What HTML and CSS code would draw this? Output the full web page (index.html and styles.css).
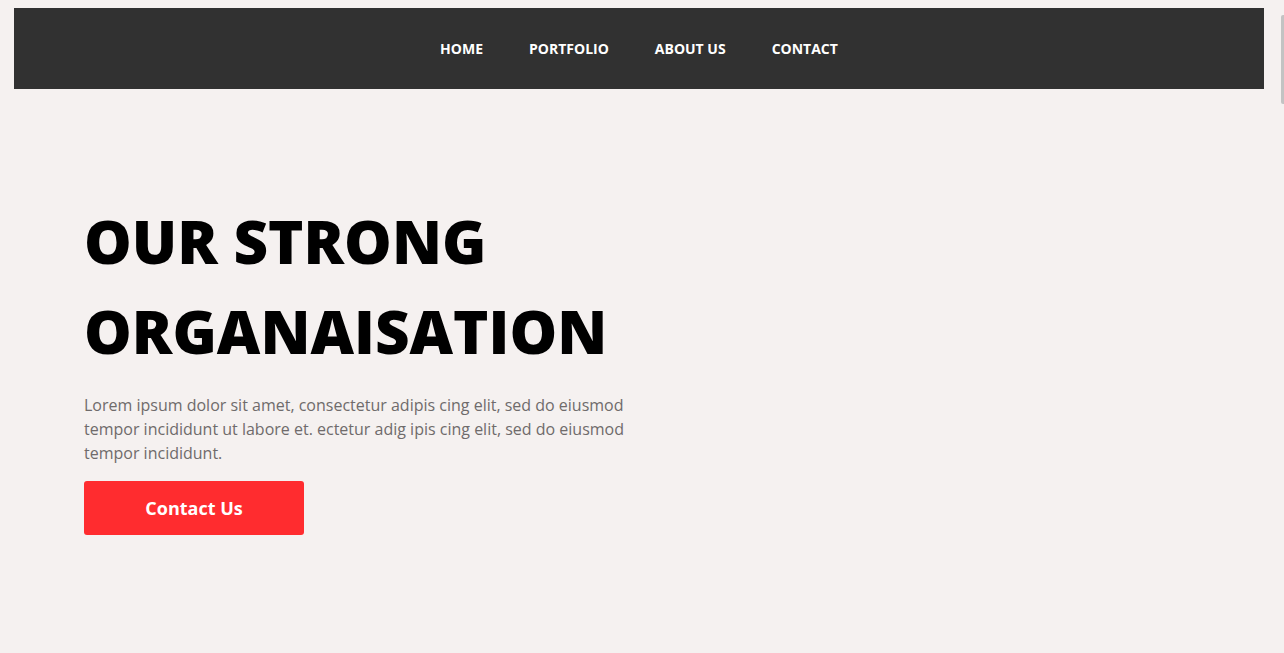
FILE: index.html
```html
<!DOCTYPE html>
<html lang="en">
<head>
<meta charset="utf-8">
<title>Our Strong Organaisation</title>
<link rel="stylesheet" href="styles.css">
</head>
<body>
  <header class="site-header">
    <nav class="main-nav">
      <a class="nav-link" href="#">Home</a>
      <a class="nav-link" href="#">Portfolio</a>
      <a class="nav-link" href="#">About Us</a>
      <a class="nav-link" href="#">Contact</a>
    </nav>
  </header>
  <main class="hero">
    <div class="hero-content">
      <h1 class="hero-title">OUR STRONG<br>ORGANAISATION</h1>
      <p class="hero-text">Lorem ipsum dolor sit amet, consectetur adipis cing elit, sed do eiusmod tempor incididunt ut labore et. ectetur adig ipis cing elit, sed do eiusmod tempor incididunt.</p>
      <a class="hero-button" href="#">Contact Us</a>
    </div>
  </main>
  <div class="scroll-thumb"></div>
</body>
</html>
```

FILE: styles.css
```css
* {
  box-sizing: border-box;
}

html, body {
  height: 100%;
}

body {
  margin: 0;
  padding: 8px 20px 0 14px;
  background: #f5f1f0;
  font-family: "Open Sans", "Liberation Sans", sans-serif;
  overflow: hidden;
}

.site-header {
  background: #313131;
  height: 81px;
  display: flex;
  align-items: center;
  justify-content: center;
}

.main-nav {
  display: flex;
  gap: 46px;
  padding-top: 1px;
}

.nav-link {
  color: #ffffff;
  text-decoration: none;
  text-transform: uppercase;
  font-weight: 700;
  font-size: 14px;
  line-height: 20px;
}

.hero {
  padding: 107px 0 0 70px;
}

.hero-content {
  width: 545px;
}

.hero-title {
  margin: 0;
  font-size: 60px;
  line-height: 90px;
  font-weight: 800;
  color: #000000;
  white-space: nowrap;
}

.hero-text {
  margin: 17px 0 16px;
  font-size: 16px;
  line-height: 24px;
  color: #6f6b6b;
}

.hero-button {
  display: flex;
  align-items: center;
  justify-content: center;
  width: 220px;
  height: 54px;
  background: #ff2c2f;
  color: #ffffff;
  border-radius: 3px;
  text-decoration: none;
  font-weight: 700;
  font-size: 18px;
}

.scroll-thumb {
  position: fixed;
  right: 0;
  top: 15px;
  width: 3px;
  height: 89px;
  background: #c3c3c3;
  border-radius: 2px 0 0 2px;
}
```
